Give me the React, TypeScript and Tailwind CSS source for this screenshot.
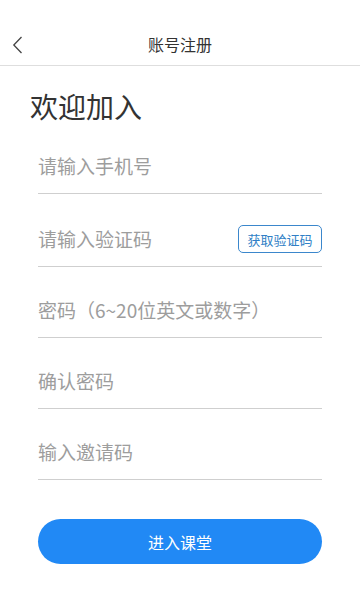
import React, { useState } from "react";

const font = { fontFamily: '"Noto Sans CJK SC", "Noto Sans", sans-serif' };

type FieldProps = {
  placeholder: string;
  type?: string;
  tall?: boolean;
  children?: React.ReactNode;
};

const Field: React.FC<FieldProps> = ({ placeholder, type = "text", tall, children }) => {
  const [value, setValue] = useState("");
  return (
    <div
      className={`flex items-center border-b border-[#cfcfcf] ${
        tall ? "h-[55px] mt-[18px]" : "h-[54px] mt-[17px]"
      }`}
    >
      <input
        type={type}
        value={value}
        onChange={(e) => setValue(e.target.value)}
        placeholder={placeholder}
        className="flex-1 min-w-0 bg-transparent outline-none text-[19px] text-[#333] placeholder:text-[#9d9d9d]"
        style={font}
      />
      {children}
    </div>
  );
};

const App: React.FC = () => {
  return (
    <div className="w-[360px] min-h-[590px] bg-white" style={font}>
      {/* 顶部导航 */}
      <div className="relative h-[66px] pt-[23px] flex items-center justify-center border-b border-[#dedede]">
        <button className="absolute left-[11px] top-[36px] w-[12px] h-[18px] flex items-center justify-center">
          <svg width="11" height="18" viewBox="0 0 11 18" fill="none">
            <path d="M9.5 1 L1.8 9 L9.5 17" stroke="#444" strokeWidth="1.3" />
          </svg>
        </button>
        <span className="text-[16px] leading-none text-[#333]">账号注册</span>
      </div>

      <div className="px-[38px]">
        <h1 className="-ml-[8px] mt-[26px] text-[28px] leading-[28px] text-[#333] font-normal">
          欢迎加入
        </h1>

        {/* 表单 */}
        <div className="pt-[3px]">
          <Field placeholder="请输入手机号" type="tel" />
          <Field placeholder="请输入验证码" tall>
            <button className="shrink-0 w-[84px] h-[28px] rounded-[5px] border border-[#3b87cc] text-[13px] text-[#2f7fc6] leading-none">
              获取验证码
            </button>
          </Field>
          <Field placeholder="密码（6~20位英文或数字）" type="password" />
          <Field placeholder="确认密码" type="password" />
          <Field placeholder="输入邀请码" />
        </div>

        <button className="mt-[39px] w-full h-[45px] rounded-full bg-[#2189f5] text-white text-[16px]">
          进入课堂
        </button>
      </div>
    </div>
  );
};

export default App;
